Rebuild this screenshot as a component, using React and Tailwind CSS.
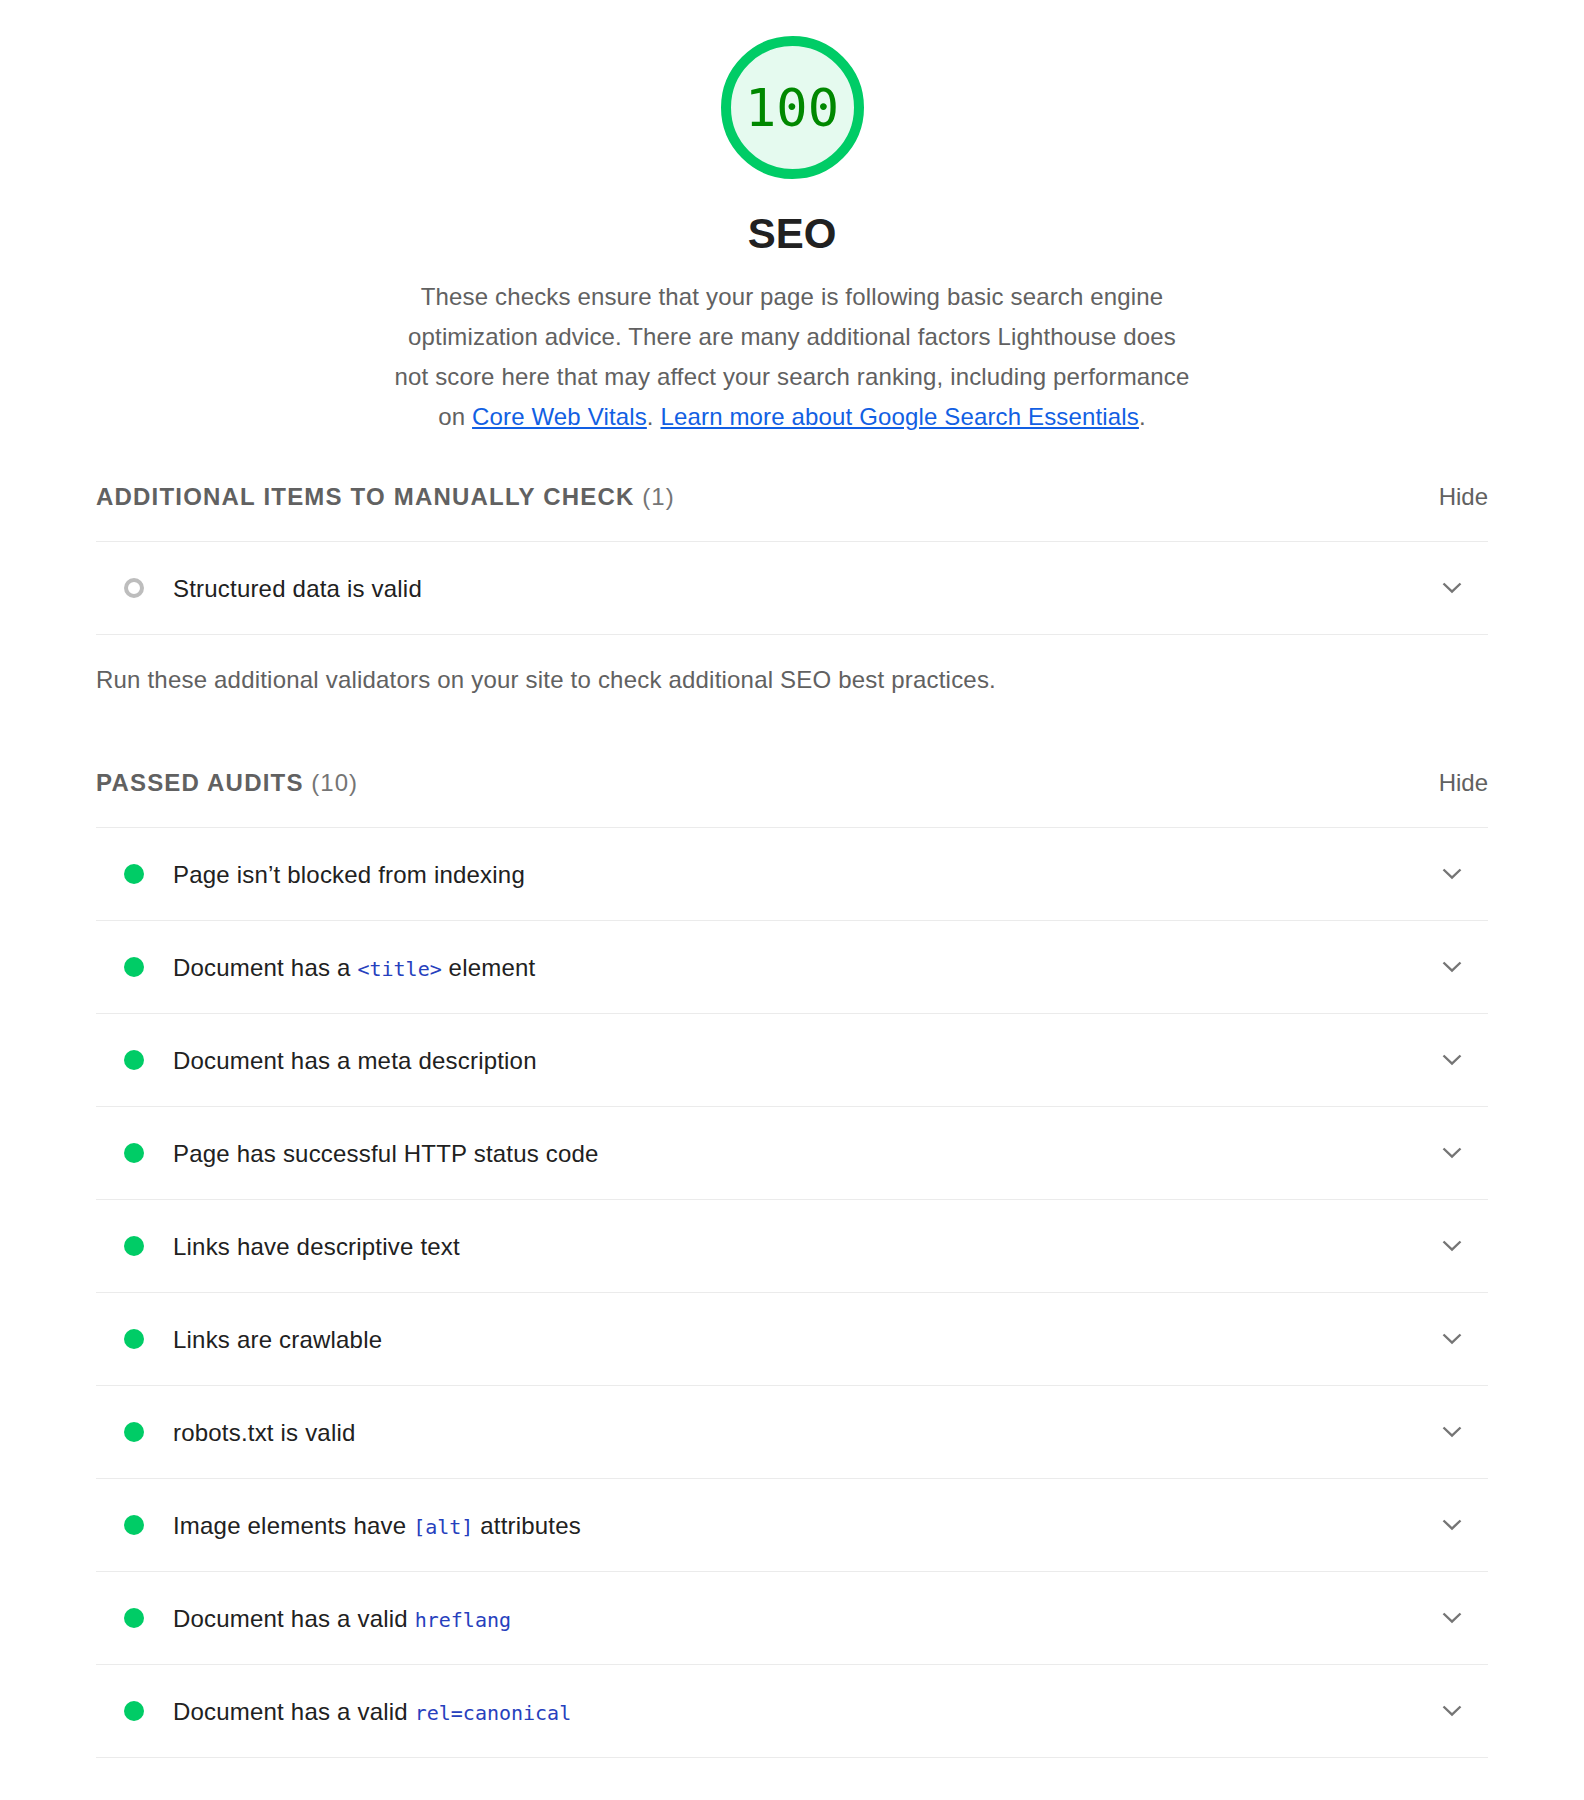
import React from 'react';

const passed = [
  { title: ['Page isn’t blocked from indexing'] },
  { title: ['Document has a ', { code: '<title>' }, ' element'] },
  { title: ['Document has a meta description'] },
  { title: ['Page has successful HTTP status code'] },
  { title: ['Links have descriptive text'] },
  { title: ['Links are crawlable'] },
  { title: ['robots.txt is valid'] },
  { title: ['Image elements have ', { code: '[alt]' }, ' attributes'] },
  { title: ['Document has a valid ', { code: 'hreflang' }] },
  { title: ['Document has a valid ', { code: 'rel=canonical' }] },
];

function Chevron() {
  return (
    <svg width="20" height="20" viewBox="0 0 20 20" className="shrink-0">
      <polyline points="1.5,5.5 10,13.5 18.5,5.5" fill="none" stroke="#757575" strokeWidth="2.4" />
    </svg>
  );
}

function Title({ parts }) {
  return (
    <span className="text-[24px] tracking-[0.2px] text-[#212121]">
      {parts.map((p, i) =>
        typeof p === 'string' ? (
          <React.Fragment key={i}>{p}</React.Fragment>
        ) : (
          <code key={i} className="font-['DejaVu_Sans_Mono',monospace] text-[20px] tracking-normal text-[#2640bd]">
            {p.code}
          </code>
        )
      )}
    </span>
  );
}

function AuditRow({ parts, manual }) {
  return (
    <div className="flex items-center h-[93px] border-b border-[#ebebeb] pl-[28px] pr-[26px]">
      {manual ? (
        <span className="w-5 h-5 rounded-full border-[4px] border-[#bdbdbd] shrink-0" />
      ) : (
        <span className="w-5 h-5 rounded-full bg-[#00cc66] shrink-0" />
      )}
      <div className="ml-[29px] pt-[2px]">
        <Title parts={parts} />
      </div>
      <div className="ml-auto">
        <Chevron />
      </div>
    </div>
  );
}

function GroupHeader({ label, count }) {
  return (
    <div className="flex items-center justify-between leading-[40px] pb-[24px] border-b border-[#ebebeb]">
      <div className="text-[24px] text-[#616161]">
        <span className="font-bold uppercase tracking-[1.2px]">{label}</span>
        <span className="text-[#757575] tracking-[1px]"> ({count})</span>
      </div>
      <button className="text-[24px] text-[#616161]">Hide</button>
    </div>
  );
}

export default function App() {
  return (
    <div className="min-h-screen bg-white font-['Liberation_Sans',Arial,sans-serif]">
      <div className="mx-auto w-[1392px] pt-[36px] pb-[42px]">
        <div className="flex flex-col items-center">
          <div className="w-[143px] h-[143px] rounded-full border-[10px] border-[#00cc66] bg-[#e5faef] flex items-center justify-center">
            <span className="font-['DejaVu_Sans_Mono',monospace] text-[52px] leading-none text-[#008800]">100</span>
          </div>
          <h2 className="mt-[30px] text-[42px] leading-[50px] font-bold text-[#212121]">SEO</h2>
          <p className="mt-[18px] text-[24px] tracking-[0.15px] leading-[40px] text-center text-[#616161]">
            These checks ensure that your page is following basic search engine
            <br />
            optimization advice. There are many additional factors Lighthouse does
            <br />
            not score here that may affect your search ranking, including performance
            <br />
            on <a href="#" className="text-[#125fe3] underline">Core Web Vitals</a>.{' '}
            <a href="#" className="text-[#125fe3] underline">Learn more about Google Search Essentials</a>.
          </p>
        </div>

        {/* Manual checks */}
        <section className="mt-[40px]">
          <GroupHeader label="Additional items to manually check" count={1} />
          <AuditRow parts={['Structured data is valid']} manual />
          <p className="mt-[25px] text-[24px] tracking-[0.2px] leading-[40px] text-[#616161]">
            Run these additional validators on your site to check additional SEO best practices.
          </p>
        </section>

        {/* Passed audits */}
        <section className="mt-[63px]">
          <GroupHeader label="Passed audits" count={10} />
          {passed.map((a, i) => (
            <AuditRow key={i} parts={a.title} />
          ))}
        </section>
      </div>
    </div>
  );
}
